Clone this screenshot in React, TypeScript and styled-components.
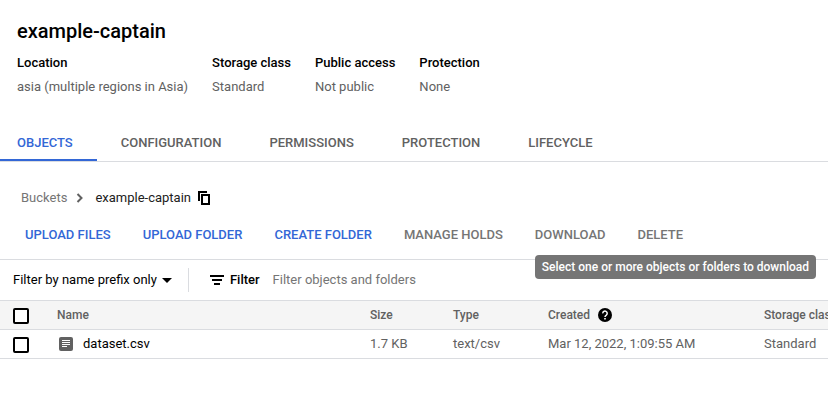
import React from "react";
import styled, { createGlobalStyle, css } from "styled-components";

const GlobalStyle = createGlobalStyle`
  *, *::before, *::after { box-sizing: border-box; }
  body {
    margin: 0;
    background: #fff;
    color: #000;
    font: 400 13px/20px Roboto, "Liberation Sans", sans-serif;
    overflow-x: hidden;
  }
  button, input { font: inherit; color: inherit; }
  svg { display: block; flex: none; }
`;

const Header = styled.header`
  padding: 19px 17px 0;
`;

const Title = styled.h1`
  margin: 0;
  font-size: 20px;
  font-weight: 500;
  line-height: 24px;
`;

const Facts = styled.dl`
  display: flex;
  gap: 24px;
  margin: 10px 0 0;
  white-space: nowrap;
`;

const FactName = styled.dt`
  font-weight: 500;
`;

const FactValue = styled.dd`
  margin: 4px 0 0;
  color: #616161;
`;

const Tabs = styled.nav`
  display: flex;
  margin-top: 27px;
  border-bottom: 1px solid #dadce0;
`;

const Tab = styled.button<{ $active?: boolean }>`
  height: 37px;
  padding: 2px 24px 0;
  border: 0;
  border-bottom: 2px solid ${(p) => (p.$active ? "#3367d6" : "transparent")};
  background: none;
  color: ${(p) => (p.$active ? "#3367d6" : "#616161")};
  font-weight: 500;
  text-transform: uppercase;
  cursor: pointer;
  &:first-child { padding-left: 17px; }
`;

const Breadcrumbs = styled.nav`
  display: flex;
  align-items: center;
  height: 20px;
  margin-top: 26px;
  padding-left: 21px;
`;

const CrumbLink = styled.a`
  margin-right: 9px;
  color: #757575;
  text-decoration: none;
`;

const Crumb = styled.span`
  margin: 0 7px 0 12px;
  color: #212121;
`;

const IconButton = styled.button`
  display: inline-flex;
  padding: 0;
  border: 0;
  background: none;
  cursor: pointer;
`;

const Toolbar = styled.div`
  display: flex;
  gap: 32px;
  padding: 17px 25px 14px;
  border-bottom: 1px solid #dadce0;
`;

const Action = styled.button`
  padding: 0;
  border: 0;
  background: none;
  color: #3367d6;
  font-weight: 500;
  text-transform: uppercase;
  white-space: nowrap;
  cursor: pointer;
  &:disabled { color: #757575; cursor: default; }
`;

const TipAnchor = styled.span`
  position: relative;
  display: inline-flex;
`;

const Tooltip = styled.span`
  position: absolute;
  top: 100%;
  left: 0;
  z-index: 1;
  margin-top: 10px;
  padding: 2px 7px;
  border-radius: 4px;
  background: #757575;
  color: #fff;
  font-size: 12px;
  font-weight: 500;
  white-space: nowrap;
`;

const FilterBar = styled.div`
  display: flex;
  align-items: center;
  height: 40px;
  padding-left: 13px;
`;

const PrefixButton = styled.button`
  display: inline-flex;
  align-items: center;
  gap: 5px;
  padding: 0;
  border: 0;
  background: none;
  white-space: nowrap;
  cursor: pointer;
`;

const Divider = styled.span`
  width: 1px;
  height: 24px;
  margin: 0 21px 0 16px;
  background: #dadce0;
`;

const FilterLabel = styled.label`
  display: inline-flex;
  align-items: center;
  gap: 6px;
  font-weight: 500;
`;

const FilterInput = styled.input`
  flex: 1;
  min-width: 0;
  margin-left: 13px;
  padding: 0;
  border: 0;
  outline: 0;
  background: none;
  &::placeholder { color: #757575; opacity: 1; }
`;

const TableClip = styled.div`
  overflow: hidden;
`;

const Table = styled.table`
  width: 100%;
  table-layout: fixed;
  border-collapse: collapse;
  border-top: 1px solid #dadce0;
  text-align: left;
  white-space: nowrap;
`;

const Col = styled.col<{ $width?: number }>`
  width: ${(p) => (p.$width ? `${p.$width}px` : "auto")};
`;

const cell = css`
  height: 29px;
  padding: 0 0 0 12px;
  border-bottom: 1px solid #dadce0;
`;

const HeadCell = styled.th`
  ${cell}
  background: #f5f5f5;
  color: #616161;
  font-size: 12px;
  font-weight: 500;
`;

const Cell = styled.td`
  ${cell}
  color: #616161;
`;

const Inline = styled.span<{ $gap: number; $indent?: number }>`
  display: flex;
  align-items: center;
  gap: ${(p) => p.$gap}px;
  padding-left: ${(p) => p.$indent ?? 0}px;
`;

const FileLink = styled.a`
  color: #000;
  text-decoration: none;
`;

const Checkbox = styled.input`
  display: block;
  appearance: none;
  width: 16px;
  height: 16px;
  margin: 1px 0 0 1px;
  border: 2px solid #000;
  border-radius: 2px;
  background: #fff;
  &:checked { background: #3367d6; border-color: #3367d6; }
`;

const ChevronIcon = () => (
  <svg width="7" height="10" viewBox="0 0 7 10" fill="none" stroke="#616161" strokeWidth="2" aria-hidden="true">
    <path d="M1.5 1l4 4-4 4" />
  </svg>
);

const CopyIcon = () => (
  <svg width="12" height="14" viewBox="0 0 12 14" fill="none" stroke="#000" strokeWidth="2" aria-hidden="true">
    <path d="M1 10V1h8" />
    <path d="M4 4h7v9H4z" />
  </svg>
);

const CaretIcon = () => (
  <svg width="10" height="5" viewBox="0 0 10 5" aria-hidden="true">
    <path d="M0 0h10L5 5z" />
  </svg>
);

const FilterIcon = () => (
  <svg width="14" height="10" viewBox="0 0 14 10" aria-hidden="true">
    <path d="M0 0h14v2H0zM2 4h10v2H2zM4 8h6v2H4z" />
  </svg>
);

const FileIcon = () => (
  <svg width="14" height="14" viewBox="0 0 14 14" aria-hidden="true">
    <rect width="14" height="14" rx="2" fill="#616161" />
    <path d="M3 3.5h8M3 5.5h8M3 7.5h8M3 9.5h5" stroke="#fff" />
  </svg>
);

const HelpIcon = () => (
  <svg width="14" height="14" viewBox="0 0 14 14" aria-hidden="true">
    <circle cx="7" cy="7" r="7" />
    <path d="M4.8 5.4a2.2 2.2 0 1 1 3.5 1.7C7.4 7.7 7 8 7 9" fill="none" stroke="#fff" strokeWidth="1.5" />
    <path d="M6.2 10h1.6v1.6H6.2z" fill="#fff" />
  </svg>
);

const facts = [
  ["Location", "asia (multiple regions in Asia)"],
  ["Storage class", "Standard"],
  ["Public access", "Not public"],
  ["Protection", "None"],
];

const tabs = ["Objects", "Configuration", "Permissions", "Protection", "Lifecycle"];

export default function App() {
  return (
    <>
      <GlobalStyle />
      <Header>
        <Title>example-captain</Title>
        <Facts>
          {facts.map(([name, value]) => (
            <div key={name}>
              <FactName>{name}</FactName>
              <FactValue>{value}</FactValue>
            </div>
          ))}
        </Facts>
      </Header>
      <Tabs aria-label="Bucket sections">
        {tabs.map((tab, i) => (
          <Tab key={tab} type="button" $active={i === 0}>{tab}</Tab>
        ))}
      </Tabs>
      <main>
        <Breadcrumbs aria-label="Breadcrumb">
          <CrumbLink href="#buckets">Buckets</CrumbLink>
          <ChevronIcon />
          <Crumb>example-captain</Crumb>
          <IconButton type="button" aria-label="Copy path"><CopyIcon /></IconButton>
        </Breadcrumbs>
        <Toolbar>
          <Action type="button">Upload files</Action>
          <Action type="button">Upload folder</Action>
          <Action type="button">Create folder</Action>
          <Action type="button" disabled>Manage holds</Action>
          <TipAnchor>
            <Action type="button" disabled aria-describedby="download-tip">Download</Action>
            <Tooltip id="download-tip" role="tooltip">Select one or more objects or folders to download</Tooltip>
          </TipAnchor>
          <Action type="button" disabled>Delete</Action>
        </Toolbar>
        <FilterBar>
          <PrefixButton type="button">Filter by name prefix only <CaretIcon /></PrefixButton>
          <Divider />
          <FilterLabel htmlFor="filter"><FilterIcon />Filter</FilterLabel>
          <FilterInput id="filter" placeholder="Filter objects and folders" />
        </FilterBar>
        <TableClip>
          <Table>
            <colgroup>
              <Col $width={45} />
              <Col />
              <Col $width={83} />
              <Col $width={95} />
              <Col $width={216} />
              <Col $width={76} />
            </colgroup>
            <thead>
              <tr>
                <HeadCell><Checkbox type="checkbox" aria-label="Select all objects" /></HeadCell>
                <HeadCell>Name</HeadCell>
                <HeadCell>Size</HeadCell>
                <HeadCell>Type</HeadCell>
                <HeadCell><Inline $gap={8}>Created <HelpIcon /></Inline></HeadCell>
                <HeadCell>Storage class</HeadCell>
              </tr>
            </thead>
            <tbody>
              <tr>
                <Cell><Checkbox type="checkbox" aria-label="Select dataset.csv" /></Cell>
                <Cell><Inline $gap={10} $indent={2}><FileIcon /><FileLink href="#dataset.csv">dataset.csv</FileLink></Inline></Cell>
                <Cell>1.7 KB</Cell>
                <Cell>text/csv</Cell>
                <Cell>Mar 12, 2022, 1:09:55 AM</Cell>
                <Cell>Standard</Cell>
              </tr>
            </tbody>
          </Table>
        </TableClip>
      </main>
    </>
  );
}
